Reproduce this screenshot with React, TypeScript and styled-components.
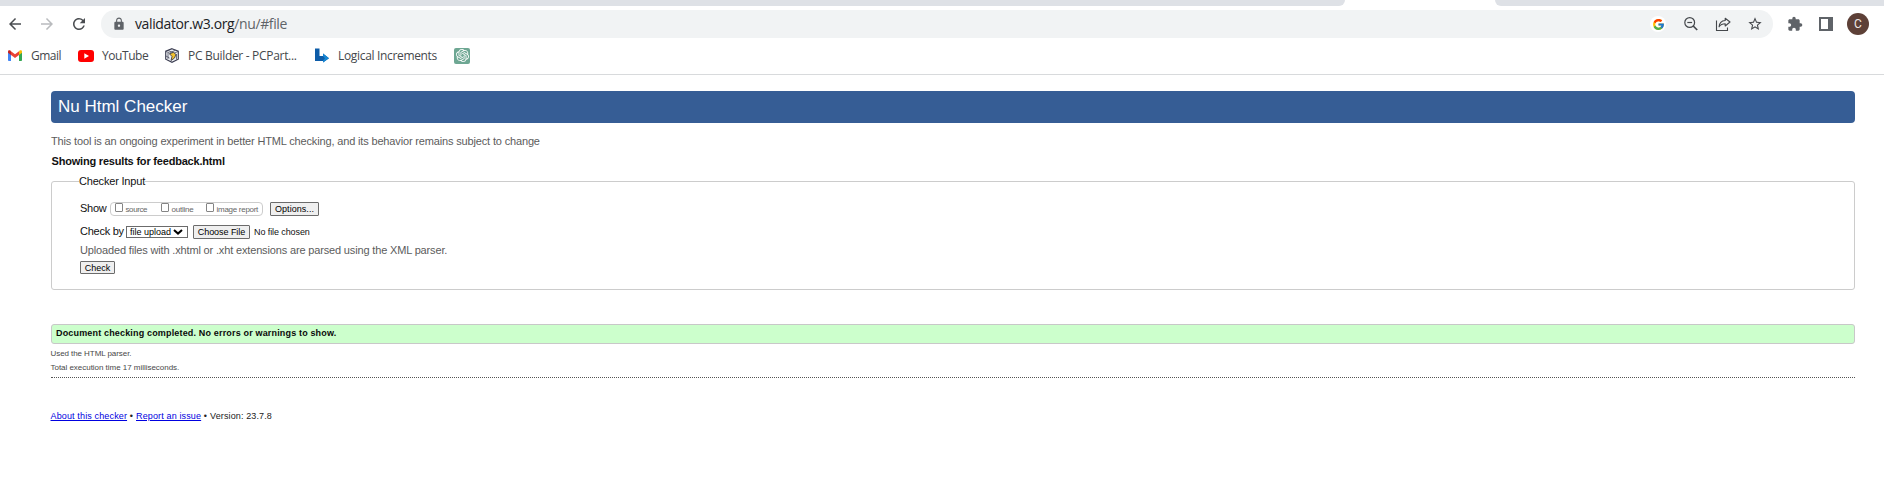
import React from 'react';
import styled, { createGlobalStyle } from 'styled-components';
import { MdArrowBack, MdArrowForward, MdRefresh, MdLock, MdExtension, MdStarBorder } from 'react-icons/md';
import { FcGoogle } from 'react-icons/fc';
import { SiOpenai } from 'react-icons/si';

const Global = createGlobalStyle`
  * { box-sizing: border-box; }
  html, body { margin: 0; background: #fff; overflow: hidden; }
  body { font-family: "Liberation Sans", Arial, sans-serif; }
`;

/* Browser chrome */
const TabStrip = styled.div`
  display: flex;
  justify-content: space-between;
  height: 6px;
  background: #fff;
`;
const TabEdge = styled.div<{ $side: 'left' | 'right' }>`
  width: ${p => (p.$side === 'left' ? '1345px' : '389px')};
  background: #dee1e6;
  border-radius: ${p => (p.$side === 'left' ? '0 0 7px 0' : '0 0 0 7px')};
`;
const Toolbar = styled.div`
  display: flex;
  align-items: center;
  height: 36px;
  padding: 0 13px 0 6px;
  color: #5f6368;
  svg { display: block; flex: none; }
`;
const NavButtons = styled.div`
  display: flex;
  gap: 14px;
  width: 95px;
  color: #4a4d51;
  svg:nth-child(2) { color: #b9bbbe; }
`;
const AddressBar = styled.div`
  display: flex;
  align-items: center;
  width: 1672px;
  height: 28px;
  padding: 0 10px 0 11px;
  border-radius: 14px;
  background: #f1f3f4;
`;
const Url = styled.div`
  flex: 1;
  margin-left: 9px;
  font: 14px/20px "Open Sans", "Noto Sans", sans-serif;
  letter-spacing: -0.376px;
  color: #5f6368;
  b { font-weight: 400; color: #202124; }
`;
const AddressActions = styled.div`
  display: flex;
  align-items: center;
  gap: 16px;
  color: #45484c;
`;
const GoogleBadge = styled.span`
  display: grid;
  place-items: center;
  width: 16px;
  height: 16px;
  margin-right: 1px;
  border-radius: 8px;
  background: #fff;
`;
const WindowActions = styled.div`
  display: flex;
  align-items: center;
  gap: 16px;
  margin-left: 14px;
`;
const Avatar = styled.span`
  display: grid;
  place-items: center;
  width: 22px;
  height: 22px;
  margin-left: -2px;
  border-radius: 50%;
  background: #5d4037;
  color: #f0e8e5;
  font: 12px/22px Roboto, sans-serif;
`;
const Bookmarks = styled.div`
  display: flex;
  align-items: center;
  height: 33px;
  padding: 0 0 5px 8px;
  border-bottom: 1px solid #d8dadc;
`;
const Bookmark = styled.div<{ $width: number; $gap: number; $track: number }>`
  display: flex;
  align-items: center;
  gap: ${p => p.$gap}px;
  width: ${p => p.$width}px;
  white-space: nowrap;
  font: 12px/16px "Open Sans", "Noto Sans", sans-serif;
  letter-spacing: ${p => p.$track}px;
  color: #45484c;
  svg { display: block; flex: none; }
`;
const ChatIcon = styled.span`
  display: grid;
  place-items: center;
  width: 16px;
  height: 16px;
  border-radius: 2px;
  background: #6ea793;
  color: #fff;
`;

/* Checker page */
const Page = styled.main`
  display: flex;
  flex-direction: column;
  padding: 16px 29px 0 51px;
  white-space: nowrap;
`;
const Title = styled.h1`
  height: 32px;
  margin: 0;
  padding-left: 7px;
  border-radius: 4px;
  background: #365d95;
  color: #fff;
  font-size: 17px;
  font-weight: 400;
  line-height: 31px;
  letter-spacing: 0;
`;
const Intro = styled.p`
  margin: 11px 0 0;
  font-size: 11px;
  line-height: 14px;
  letter-spacing: -0.155px;
  color: #5c5c5c;
`;
const ResultsHeading = styled.h2`
  margin: 6px 0 6px;
  padding-left: 0.5px;
  font-size: 11px;
  line-height: 14px;
  letter-spacing: -0.195px;
  color: #111;
`;
const InputForm = styled.fieldset`
  height: 116px;
  min-width: 0;
  margin: 0;
  padding: 13px 28px 0;
  border: 1px solid #ccc;
  border-radius: 3px;
  font-size: 11px;
  line-height: 14px;
  color: #111;
`;
const Legend = styled.legend`
  height: 14px;
  margin-left: -1px;
  padding: 0;
  letter-spacing: -0.19px;
`;
const FormRow = styled.div<{ $after: number }>`
  display: flex;
  align-items: center;
  height: 14px;
  margin-bottom: ${p => p.$after}px;
`;
const Label = styled.label<{ $width: number; $track: number }>`
  width: ${p => p.$width}px;
  letter-spacing: ${p => p.$track}px;
`;
const ShowGroup = styled.div`
  display: flex;
  width: 153px;
  height: 14px;
  margin: 1px 7px 0 0;
  padding-left: 4px;
  border: 1px solid #ccc;
  border-radius: 4px;
`;
const ShowOption = styled.label<{ $width: number; $track: number }>`
  display: flex;
  gap: 2.5px;
  width: ${p => p.$width}px;
  font-size: 8px;
  line-height: 14px;
  letter-spacing: ${p => p.$track}px;
  color: #666;
`;
const CheckBox = styled.span`
  flex: none;
  width: 8px;
  height: 9px;
  border: 1px solid #858585;
  border-radius: 1px;
  background: #fff;
`;
const Button = styled.button<{ $width: number; $height?: number; $track?: number }>`
  display: block;
  flex: none;
  width: ${p => p.$width}px;
  height: ${p => p.$height ?? 14}px;
  margin: 1px 0 0;
  padding: 0;
  border: 1px solid #6b6b6b;
  border-radius: 1px;
  background: #efefef;
  color: #000;
  font: 9px/12px "Liberation Sans", Arial, sans-serif;
  letter-spacing: ${p => p.$track ?? 0}px;
  text-align: center;
`;
const Select = styled.div`
  display: flex;
  align-items: center;
  justify-content: space-between;
  width: 62px;
  height: 12px;
  margin: 2px 5px 0 0;
  padding: 0 4px 0 3px;
  border: 1px solid #6b6b6b;
  background: #fff;
  color: #000;
  font-size: 9px;
  line-height: 10px;
`;
const FileName = styled.span`
  margin: 2px 0 0 4px;
  font-size: 9px;
  line-height: 12px;
  letter-spacing: -0.09px;
`;
const Hint = styled.p`
  margin: 0 0 4px;
  letter-spacing: -0.155px;
  color: #5c5c5c;
`;
const Success = styled.p`
  height: 20px;
  margin: 34px 0 5px;
  padding-left: 4px;
  border: 1px solid #c8c8c8;
  border-radius: 3px;
  background: #cfc;
  color: #0a0a0a;
  font-size: 9px;
  font-weight: 700;
  line-height: 16px;
  letter-spacing: 0.165px;
`;
const Detail = styled.p<{ $track: number }>`
  height: 14px;
  margin: 0 0 0 -0.5px;
  font-size: 8px;
  line-height: 10px;
  letter-spacing: ${p => p.$track}px;
  color: #484848;
`;
const Divider = styled.hr`
  width: 100%;
  height: 0;
  margin: 0 0 32px;
  border: 0;
  border-top: 1px dotted #555;
`;
const Footer = styled.footer`
  display: flex;
  margin-left: -0.5px;
  font-size: 9px;
  line-height: 12px;
  color: #222;
  letter-spacing: 0.131px;
`;
const FooterLink = styled.a<{ $width: number }>`
  width: ${p => p.$width}px;
  color: #0000e0;
  letter-spacing: 0.14px;
  text-decoration: underline;
`;
const Bullet = styled.span`
  width: 9px;
  text-align: center;
`;

const GmailIcon = () => (
  <svg width="14" height="11" viewBox="0 0 14 11">
    <path d="M0 2v8.2c0 .4.4.8.8.8H3V4z" fill="#4285f4" />
    <path d="M14 2v8.2c0 .4-.4.8-.8.8H11V4z" fill="#34a853" />
    <path d="M11 1.200V5l3-2.300V1.500C14 .2 12.500-.2 11.600.6z" fill="#fbbc04" />
    <path d="M3 5V1.200l4 3 4-3V5L7 8z" fill="#ea4335" />
    <path d="M0 1.500V2.700L3 5V1.200L2.400.6C1.500-.2 0 .2 0 1.500z" fill="#c5221f" />
  </svg>
);
const YouTubeIcon = () => (
  <svg width="16" height="12" viewBox="0 0 16 12">
    <rect width="16" height="12" rx="3" fill="#f00" />
    <path d="M6.300 3.300v5.400L11 6z" fill="#fff" />
  </svg>
);
const PartsIcon = () => (
  <svg width="14" height="15" viewBox="0 0 14 15">
    <path d="M7 .7 13.300 3.200v8L7 14.300.7 11.200v-8z" fill="#eceef2" stroke="#3a3c50" strokeWidth="1.100" />
    <path d="M1 3.500 5.500 5.500M13 3.500 8.500 5.500M3 2.500l6 2.500M10.500 2.300 5 4.500M1 8l3.500 2M11.500 6v5.500M3 5v6" fill="none" stroke="#3a3c50" strokeWidth=".7" />
    <path d="M4.500 5.800 8.500 4.300 11 6.500 9.500 10 6 12.500l1-4z" fill="#f2c230" stroke="#2b2d42" strokeWidth=".8" />
  </svg>
);
const LogicalIcon = () => (
  <svg width="14" height="15" viewBox="0 0 14 15">
    <path d="M0 .5h4.500v7.500H8V5.500l6 4.800-6 4.200V13H0z" fill="#0d5ca8" />
    <path d="m8 5.500 6 4.800-6 4.200v-2l2-2.200-2-2z" fill="#1687d3" />
  </svg>
);
const ZoomOutIcon = () => (
  <svg width="16" height="16" viewBox="0 0 16 16" fill="none" stroke="currentColor" strokeWidth="1.200">
    <circle cx="6.700" cy="6.500" r="4.900" />
    <path d="M4.300 6.500h4.800" />
    <path d="m10.200 10 4 4" strokeWidth="1.700" />
  </svg>
);
const ShareIcon = () => (
  <svg width="16" height="16" viewBox="0 0 16 16" fill="none" stroke="currentColor" strokeWidth="1.100">
    <path d="M1.500 4.500v10h11v-3" />
    <path d="M10.200 2.200 15 6l-4.800 4V7.700C7 7.700 5.500 8.500 4.100 10.800 4.300 7.200 6.200 4.800 10.200 4.500z" strokeLinejoin="round" />
  </svg>
);
const PanelIcon = () => (
  <svg width="14" height="14" viewBox="0 0 14 14">
    <path d="M1 1h12v12H1z" fill="#fff" stroke="#5f6368" strokeWidth="2" />
    <path d="M9 0h5v14H9z" fill="#5f6368" />
  </svg>
);
const ChevronIcon = () => (
  <svg width="10" height="6" viewBox="0 0 10 6">
    <path d="m1 1 4 3.600L9 1" fill="none" stroke="#000" strokeWidth="2" />
  </svg>
);

export default function App() {
  return (
    <>
      <Global />
      <TabStrip>
        <TabEdge $side="left" />
        <TabEdge $side="right" />
      </TabStrip>
      <Toolbar>
        <NavButtons>
          <MdArrowBack size={18} />
          <MdArrowForward size={18} />
          <MdRefresh size={18} />
        </NavButtons>
        <AddressBar>
          <MdLock size={14} />
          <Url><b>validator.w3.org</b>/nu/#file</Url>
          <AddressActions>
            <GoogleBadge><FcGoogle size={13} /></GoogleBadge>
            <ZoomOutIcon />
            <ShareIcon />
            <MdStarBorder size={16} />
          </AddressActions>
        </AddressBar>
        <WindowActions>
          <MdExtension size={16} />
          <PanelIcon />
          <Avatar>C</Avatar>
        </WindowActions>
      </Toolbar>
      <Bookmarks>
        <Bookmark $width={70} $gap={9} $track={-0.5}><GmailIcon />Gmail</Bookmark>
        <Bookmark $width={87} $gap={8} $track={-0.43}><YouTubeIcon />YouTube</Bookmark>
        <Bookmark $width={150} $gap={9} $track={-0.31}><PartsIcon />PC Builder - PCPart...</Bookmark>
        <Bookmark $width={139} $gap={9} $track={-0.33}><LogicalIcon />Logical Increments</Bookmark>
        <ChatIcon><SiOpenai size={13} /></ChatIcon>
      </Bookmarks>
      <Page>
        <Title>Nu Html Checker</Title>
        <Intro>This tool is an ongoing experiment in better HTML checking, and its behavior remains subject to change</Intro>
        <ResultsHeading>Showing results for feedback.html</ResultsHeading>
        <InputForm>
          <Legend>Checker Input</Legend>
          <FormRow $after={9}>
            <Label $width={30} $track={-0.25}>Show</Label>
            <ShowGroup>
              <ShowOption $width={46} $track={-0.4}><CheckBox />source</ShowOption>
              <ShowOption $width={45} $track={-0.22}><CheckBox />outline</ShowOption>
              <ShowOption $width={55} $track={-0.28}><CheckBox />image report</ShowOption>
            </ShowGroup>
            <Button $width={49} $track={0.05}>Options...</Button>
          </FormRow>
          <FormRow $after={5}>
            <Label $width={46} $track={-0.25}>Check by</Label>
            <Select>file upload<ChevronIcon /></Select>
            <Button $width={57} $track={-0.05}>Choose File</Button>
            <FileName>No file chosen</FileName>
          </FormRow>
          <Hint>Uploaded files with .xhtml or .xht extensions are parsed using the XML parser.</Hint>
          <Button $width={35} $height={13}>Check</Button>
        </InputForm>
        <Success>Document checking completed. No errors or warnings to show.</Success>
        <Detail $track={-0.07}>Used the HTML parser.</Detail>
        <Detail $track={-0.03}>Total execution time 17 milliseconds.</Detail>
        <Divider />
        <Footer>
          <FooterLink $width={76.5}>About this checker</FooterLink>
          <Bullet>•</Bullet>
          <FooterLink $width={65}>Report an issue</FooterLink>
          <Bullet>•</Bullet>
          <span>Version: 23.7.8</span>
        </Footer>
      </Page>
    </>
  );
}
